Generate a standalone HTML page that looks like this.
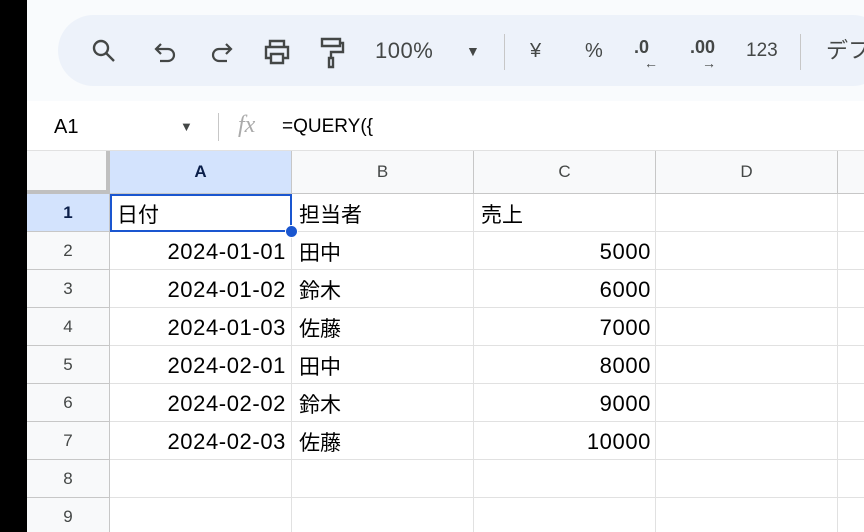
<!DOCTYPE html><html><head><meta charset="utf-8"><style>
*{margin:0;padding:0;box-sizing:border-box}
html,body{width:864px;height:532px;overflow:hidden}
body{background:#fff;font-family:"Liberation Sans","Noto Sans CJK JP",sans-serif;position:relative}
.blk{position:absolute;left:0;top:0;width:27px;height:532px;background:#000}
.top{position:absolute;left:27px;top:0;width:837px;height:101px;background:#f9fbfd}
.pill{position:absolute;left:58px;top:15px;width:830px;height:71px;border-radius:36px;background:#edf2fa}
.t{position:absolute;top:37px;font-size:22px;color:#444746;white-space:nowrap;line-height:28px}
.fb{position:absolute;left:27px;top:101px;width:837px;height:50px;background:#fff;border-bottom:1px solid #e1e1e1}
.g{position:absolute;font-size:20px;color:#000;line-height:24px;white-space:nowrap}
.hd{position:absolute;background:#f8f9fa;color:#444746;font-size:17px;text-align:center;border-right:1px solid #c7c7c7;border-bottom:1px solid #c7c7c7}
.cell{position:absolute;font-size:22px;letter-spacing:0.6px;color:#000;white-space:nowrap;height:38px;line-height:38px}
.j{letter-spacing:0;font-size:21px;margin-top:3px}
.vl{position:absolute;width:1px;height:338px;background:#e1e1e1}
.hl{position:absolute;left:110px;width:754px;height:1px;background:#e1e1e1}
</style></head><body>
<div class="blk"></div>
<div class="top"></div>
<div class="pill"></div>
<svg style="position:absolute;left:90px;top:38px" width="30" height="28" viewBox="0 0 30 28" fill="none" stroke="#444746" stroke-width="2.4"><circle cx="11" cy="10" r="7"/><path d="M16 15l8 8"/></svg>
<svg style="position:absolute;left:152px;top:40px" width="28" height="26" viewBox="0 0 28 26" fill="none" stroke="#444746" stroke-width="2.2"><path d="M5 9h11a6 6 0 010 12H8M9 4L4 9l5 5"/></svg>
<svg style="position:absolute;left:208px;top:40px" width="28" height="26" viewBox="0 0 28 26" fill="none" stroke="#444746" stroke-width="2.2"><path d="M22 9H11a6 6 0 000 12h8M18 4l5 5-5 5"/></svg>
<svg style="position:absolute;left:262px;top:38px" width="30" height="28" viewBox="0 0 30 28" fill="none" stroke="#444746" stroke-width="2.4"><path d="M8 8V3h14v5M8 20H4V9h22v11h-4M9 16h12v9H9z"/></svg>
<svg style="position:absolute;left:318px;top:36px" width="28" height="34" viewBox="0 0 28 34" fill="none" stroke="#444746" stroke-width="2.4"><path d="M4 3h18v7H4zM22 7h3v9H13v6M11 22h4v9h-4z"/></svg>
<div class="t" style="left:375px;letter-spacing:0.5px">100%</div>
<div class="t" style="left:466px;font-size:14px;top:37px">▼</div>
<div style="position:absolute;left:504px;top:34px;width:1px;height:36px;background:#c7c7c7"></div>
<div class="t" style="left:530px;font-size:20px">¥</div>
<div class="t" style="left:585px;font-size:20px">%</div>
<div class="t" style="left:634px;font-size:18px;top:33px;font-weight:bold">.0<span style="position:absolute;left:10px;top:16px;font-size:14px">←</span></div>
<div class="t" style="left:690px;font-size:18px;top:33px;font-weight:bold">.00<span style="position:absolute;left:12px;top:16px;font-size:14px">→</span></div>
<div class="t" style="left:746px;font-size:19px">123</div>
<div style="position:absolute;left:800px;top:34px;width:1px;height:36px;background:#c7c7c7"></div>
<div class="t" style="left:826px">デフ</div>
<div class="fb"></div>
<div class="g" style="left:54px;top:115px">A1</div>
<div class="g" style="left:180px;top:115px;font-size:13px;color:#444746">▼</div>
<div style="position:absolute;left:218px;top:113px;width:1px;height:28px;background:#c7c7c7"></div>
<div class="g" style="left:238px;top:113px;font-family:'Liberation Serif',serif;font-style:italic;color:#aaa;font-size:24px">fx</div>
<div class="g" style="left:282px;top:115px;font-size:19px">=QUERY({</div>
<div class="hd" style="left:27px;top:151px;width:83px;height:43px;border-right:4px solid #c0c0c0;border-bottom:4px solid #c0c0c0"></div>
<div class="hd" style="left:110px;top:151px;width:182px;height:43px;line-height:42px;background:#d3e3fd;color:#0b1f4a;font-weight:bold">A</div>
<div class="hd" style="left:292px;top:151px;width:182px;height:43px;line-height:42px">B</div>
<div class="hd" style="left:474px;top:151px;width:182px;height:43px;line-height:42px">C</div>
<div class="hd" style="left:656px;top:151px;width:182px;height:43px;line-height:42px">D</div>
<div class="hd" style="left:838px;top:151px;width:30px;height:43px"></div>
<div class="hd" style="left:27px;top:194px;width:83px;height:38px;line-height:38px;background:#d3e3fd;color:#0b1f4a;font-weight:bold">1</div>
<div class="hd" style="left:27px;top:232px;width:83px;height:38px;line-height:38px">2</div>
<div class="hd" style="left:27px;top:270px;width:83px;height:38px;line-height:38px">3</div>
<div class="hd" style="left:27px;top:308px;width:83px;height:38px;line-height:38px">4</div>
<div class="hd" style="left:27px;top:346px;width:83px;height:38px;line-height:38px">5</div>
<div class="hd" style="left:27px;top:384px;width:83px;height:38px;line-height:38px">6</div>
<div class="hd" style="left:27px;top:422px;width:83px;height:38px;line-height:38px">7</div>
<div class="hd" style="left:27px;top:460px;width:83px;height:38px;line-height:38px">8</div>
<div class="hd" style="left:27px;top:498px;width:83px;height:38px;line-height:38px">9</div>
<div class="vl" style="left:291px;top:194px"></div><div class="vl" style="left:473px;top:194px"></div><div class="vl" style="left:655px;top:194px"></div><div class="vl" style="left:837px;top:194px"></div>
<div class="hl" style="top:231px"></div><div class="hl" style="top:269px"></div><div class="hl" style="top:307px"></div><div class="hl" style="top:345px"></div><div class="hl" style="top:383px"></div><div class="hl" style="top:421px"></div><div class="hl" style="top:459px"></div><div class="hl" style="top:497px"></div>
<div style="position:absolute;left:110px;top:194px;width:182px;height:38px;border:2px solid #1a56d0"></div>
<div style="position:absolute;left:285px;top:225px;width:13px;height:13px;border-radius:50%;background:#1a56d0;border:1px solid #fff"></div>
<div class="cell j" style="left:117px;top:194px">日付</div>
<div class="cell j" style="left:299px;top:194px">担当者</div>
<div class="cell j" style="left:481px;top:194px">売上</div>
<div class="cell" style="right:578px;top:233px">2024-01-01</div><div class="cell j" style="left:299px;top:232px">田中</div><div class="cell" style="right:213px;top:233px">5000</div>
<div class="cell" style="right:578px;top:271px">2024-01-02</div><div class="cell j" style="left:299px;top:270px">鈴木</div><div class="cell" style="right:213px;top:271px">6000</div>
<div class="cell" style="right:578px;top:309px">2024-01-03</div><div class="cell j" style="left:299px;top:308px">佐藤</div><div class="cell" style="right:213px;top:309px">7000</div>
<div class="cell" style="right:578px;top:347px">2024-02-01</div><div class="cell j" style="left:299px;top:346px">田中</div><div class="cell" style="right:213px;top:347px">8000</div>
<div class="cell" style="right:578px;top:385px">2024-02-02</div><div class="cell j" style="left:299px;top:384px">鈴木</div><div class="cell" style="right:213px;top:385px">9000</div>
<div class="cell" style="right:578px;top:423px">2024-02-03</div><div class="cell j" style="left:299px;top:422px">佐藤</div><div class="cell" style="right:213px;top:423px">10000</div>
</body></html>
